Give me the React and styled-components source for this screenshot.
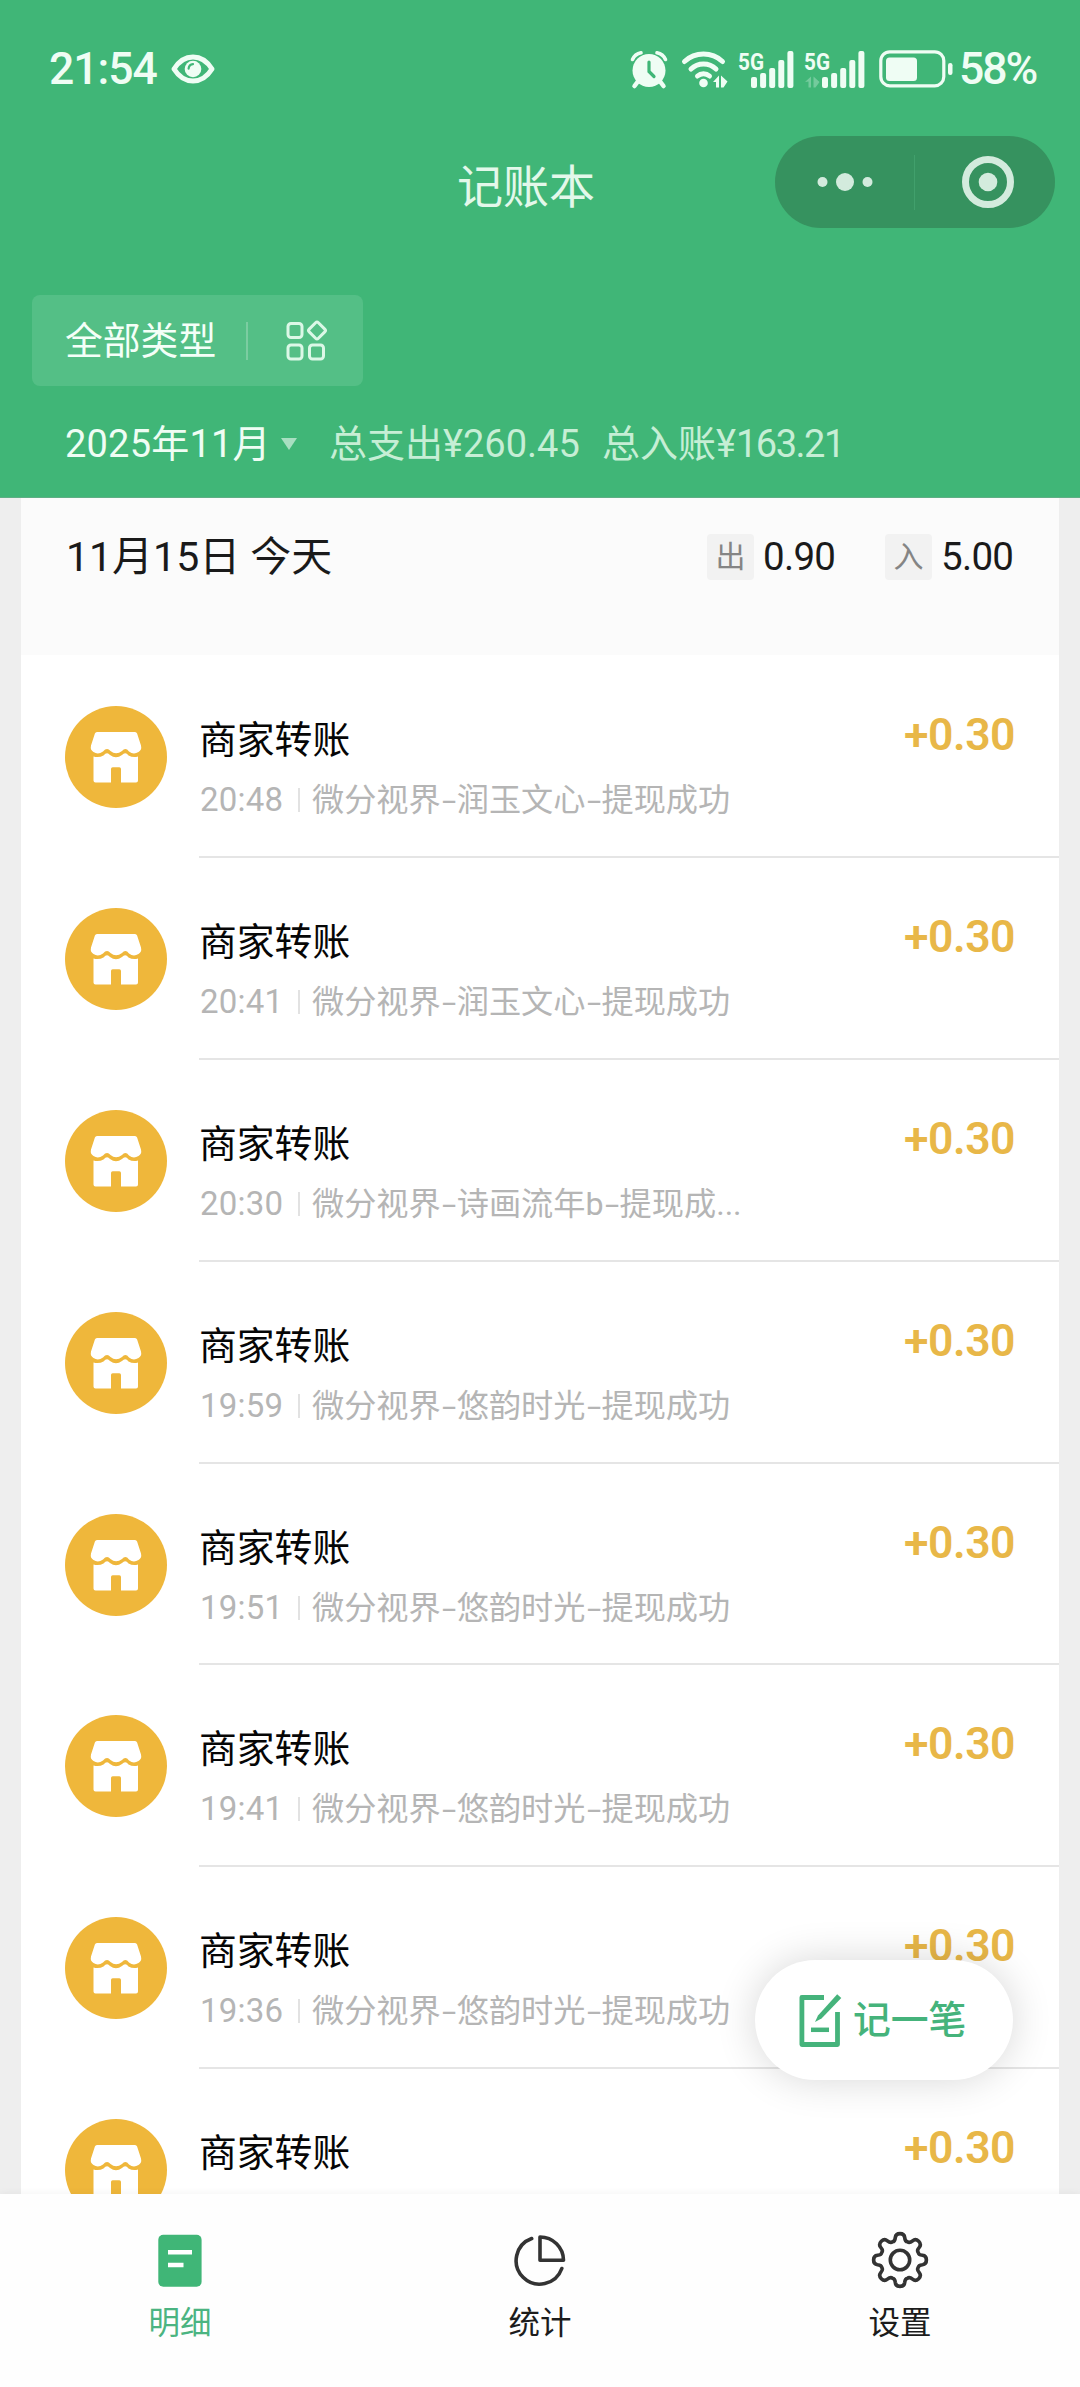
import React from 'react';
import styled, { createGlobalStyle } from 'styled-components';

const GlobalStyle = createGlobalStyle`
  * {
    box-sizing: border-box;
  }

  body {
    margin: 0;
    background: #eeeeee;
    font-family: Roboto, "Noto Sans CJK SC", sans-serif;
    overflow: hidden;
  }

  svg {
    display: block;
    flex: none;
    overflow: visible;
  }
`;

const Page = styled.div`
  display: flex;
  flex-direction: column;
  width: 1080px;
  height: 2387px;
  overflow: hidden;
  background: #eeeeee;
`;

const Header = styled.header`
  flex: none;
  height: 498px;
  background: #40b677;
  border-bottom: 1px solid #5fae85;
  color: #effdf4;
`;

const StatusBar = styled.div`
  display: flex;
  align-items: center;
  height: 92px;
  padding: 46px 42px 0 49px;
`;

const Clock = styled.span`
  width: 122px;
  font-size: 44.5px;
  font-weight: 500;
  line-height: 46px;
  letter-spacing: -1px;
  white-space: nowrap;
`;

const StatusIcons = styled.div`
  display: flex;
  align-items: center;
  gap: 9px;
  margin-left: auto;
`;

const Battery = styled.span`
  width: 79px;
  margin-left: -3px;
  font-size: 44.5px;
  font-weight: 500;
  line-height: 46px;
  letter-spacing: -2px;
  white-space: nowrap;
`;

const NavBar = styled.div`
  display: flex;
  align-items: center;
  justify-content: space-between;
  height: 92px;
  margin-top: 44px;
  padding: 0 25px 0 457px;
`;

const NavTitle = styled.h1`
  margin: 0;
  padding-top: 9px;
  font-size: 46px;
  font-weight: 400;
  line-height: 60px;
  color: #e3f8ea;
`;

const Capsule = styled.div`
  display: flex;
  align-items: center;
  width: 280px;
  height: 92px;
  border-radius: 46px;
  background: #36925f;
`;

const CapsuleButton = styled.div`
  display: flex;
  flex: none;
  align-items: center;
  justify-content: center;
  width: 139px;
  padding-left: ${({ $inset }) => $inset || 0}px;
`;

const CapsuleDivider = styled.div`
  width: 1px;
  height: 55px;
  background: #41a06c;
`;

const TypeFilter = styled.div`
  display: flex;
  align-items: center;
  width: 331px;
  height: 91px;
  margin: 67px 0 0 32px;
  padding-left: 33px;
  border-radius: 8px;
  background: #54bf86;
  font-size: 37.8px;
  line-height: 50px;
  color: #f4fff8;
`;

const FilterDivider = styled.div`
  width: 2px;
  height: 38px;
  margin: 0 38px 0 30px;
  background: #7bcda1;
`;

const MonthRow = styled.div`
  display: flex;
  align-items: center;
  height: 60px;
  margin-top: 28px;
  padding-left: 65px;
  font-size: 38px;
  line-height: 60px;
  white-space: nowrap;
`;

const Month = styled.span`
  width: 207px;
  letter-spacing: 0.2px;
`;

const Caret = styled.span`
  margin: 0 32px 0 9px;
  border: 8px solid transparent;
  border-top: 12px solid #a8dfc1;
  border-bottom: 0;
`;

const Total = styled.span`
  width: 273px;
  color: #c6eed5;
`;

const TotalValue = styled.span`
  letter-spacing: ${({ $spacing }) => $spacing || 0}px;
`;

const List = styled.main`
  position: relative;
  flex: 1;
  min-height: 0;
  margin: 0 21px;
  overflow: hidden;
  background: #ffffff;
`;

const DayHeader = styled.div`
  display: flex;
  align-items: flex-start;
  height: 158.4px;
  padding: 36px 45px 0 45px;
  background: #fbfbfb;
  border-bottom: 1px solid #ffffff;
`;

const DayTitle = styled.h2`
  flex: 1;
  margin: 0;
  font-size: 41px;
  font-weight: 400;
  line-height: 46px;
  color: #1a1a1a;
  white-space: nowrap;
`;

const DaySum = styled.div`
  display: flex;
  align-items: center;
  margin-left: 49px;
`;

const SumBadge = styled.span`
  width: 47px;
  height: 46px;
  border-radius: 4px;
  background: #f2f2f2;
  font-size: 30px;
  line-height: 46px;
  text-align: center;
  color: #858585;
`;

const SumValue = styled.span`
  width: 73px;
  margin-left: 9px;
  font-size: 38.5px;
  line-height: 46px;
  letter-spacing: -0.7px;
  color: #1a1a1a;
`;

const Entry = styled.article`
  display: flex;
  height: 201.8px;
  padding-left: 44px;
`;

const EntryIcon = styled.div`
  width: 102px;
  height: 102px;
  margin: 50px 32px 0 0;
  border-radius: 50%;
  background: #efb73b;
`;

const EntryBody = styled.div`
  display: flex;
  flex: 1;
  justify-content: space-between;
  padding-right: 44px;
  border-bottom: 2px solid #e5e5e5;
`;

const EntryTitle = styled.div`
  margin-top: 59px;
  font-size: 37.8px;
  line-height: 50px;
  color: #060606;
`;

const EntryMeta = styled.div`
  display: flex;
  align-items: center;
  height: 40px;
  margin-top: 15px;
  font-size: 32.2px;
  line-height: 40px;
  color: #b5b5b5;
  white-space: nowrap;
`;

const EntryTime = styled.span`
  width: 99px;
  padding-left: 1px;
  font-size: 33px;
  letter-spacing: 0.2px;
`;

const MetaDivider = styled.span`
  width: 2px;
  height: 24px;
  margin-right: 12px;
  background: #e2e2e2;
`;

const Dash = styled.span`
  display: inline-block;
  width: 16px;
  text-align: center;
  transform: scaleX(1.6);
`;

const EntryAmount = styled.div`
  margin-top: 54px;
  font-size: 44.5px;
  font-weight: 600;
  line-height: 50px;
  letter-spacing: -0.5px;
  color: #e8b748;
`;

const AddButton = styled.button`
  position: absolute;
  right: 46px;
  bottom: 114px;
  display: flex;
  align-items: center;
  width: 258px;
  height: 120px;
  padding: 0 0 0 44px;
  border: 0;
  border-radius: 60px;
  background: #ffffff;
  box-shadow: 0 0 40px rgba(0, 0, 0, 0.16);
  font-family: inherit;
  font-size: 37.8px;
  font-weight: 500;
  line-height: 50px;
  color: #45b37b;
  white-space: nowrap;
`;

const AddLabel = styled.span`
  margin-left: 11px;
`;

const TabBar = styled.nav`
  position: relative;
  display: grid;
  grid-template-columns: repeat(3, 1fr);
  flex: none;
  height: 193px;
  background: #fefefe;
  box-shadow: 0 0 8px rgba(0, 0, 0, 0.06);
`;

const Tab = styled.div`
  display: flex;
  flex-direction: column;
  align-items: center;
  padding-top: 36px;
  font-size: 31.5px;
  line-height: 40px;
  color: ${({ $active }) => ($active ? '#4bb481' : '#1c1c1c')};
`;

const TabLabel = styled.span`
  margin-top: 14px;
`;

const EyeIcon = () => (
  <svg width="44" height="30" viewBox="0 0 44 30" fill="none">
    <path d="M3 15C8 7 14 3 22 3s14 4 19 12c-5 8-11 12-19 12S8 23 3 15Z" stroke="#effdf4" strokeWidth="5" strokeLinejoin="round" />
    <circle cx="22" cy="15" r="8.3" fill="#effdf4" />
    <path d="M17.6 14.6a5 5 0 0 1 4.4-4.4" stroke="#40b677" strokeWidth="2.2" strokeLinecap="round" />
  </svg>
);

const AlarmIcon = () => (
  <svg width="42" height="38" viewBox="0 0 42 38" fill="none" stroke="#effdf4">
    <circle cx="19" cy="20.5" r="16.5" fill="#effdf4" stroke="none" />
    <path d="M2.5 9.5Q5 4 11 2.8M35.5 9.5Q33 4 27 2.8" strokeWidth="3.6" strokeLinecap="round" />
    <path d="M7.5 32l-3 4M30.5 32l3 4" strokeWidth="4.5" strokeLinecap="round" />
    <path d="M19 12v9.5l5 5" stroke="#40b677" strokeWidth="3.2" strokeLinecap="round" />
  </svg>
);

const WifiIcon = () => (
  <svg width="48" height="38" viewBox="0 0 48 38" fill="none" stroke="#effdf4" strokeWidth="5" strokeLinecap="round">
    <path d="M3.5 11.5a28 28 0 0 1 38 0" />
    <path d="M10 19a18 18 0 0 1 25 0" />
    <path d="M16.5 26a9 9 0 0 1 12 0" />
    <circle cx="22.5" cy="33" r="4.3" fill="#effdf4" stroke="none" />
    <path d="M32 32l6-6.500v12h-3v-5.500zM40 25.500l6.500 6-4 6h-2.500z" fill="#effdf4" stroke="none" />
  </svg>
);

const SignalIcon = ({ width, offset, idle }) => (
  <svg width={width} height="38" viewBox={`0 0 ${width} 38`} fill="#effdf4">
    <text x="0" y="19.5" fontFamily="Roboto, sans-serif" fontSize="24" fontWeight="700" textLength="26" lengthAdjust="spacingAndGlyphs">
      5G
    </text>
    {[11, 15, 20, 28, 37].map((h, i) => (
      <rect key={h} x={offset + i * 9.1} y={38 - h} width="6" height={h} rx="2" />
    ))}
    {idle && (
      <path d="M1 32l6-5.500v11h-2.500v-6zM9.500 26.500l6 5.500-4 5.500h-2z" opacity="0.3" />
    )}
  </svg>
);

const BatteryIcon = () => (
  <svg width="78" height="38" viewBox="-4 0 78 38" fill="none">
    <rect x="1.8" y="1.8" width="63" height="34" rx="9" stroke="#effdf4" strokeWidth="3.2" />
    <rect x="7" y="7.5" width="31" height="23.5" rx="3.5" fill="#effdf4" />
    <rect x="69" y="13" width="4.5" height="12" rx="2.2" fill="#effdf4" />
  </svg>
);

const MoreIcon = () => (
  <svg width="56" height="20" viewBox="0 0 56 20" fill="#d3ebdd">
    <circle cx="5.5" cy="10" r="5" />
    <circle cx="28" cy="10" r="9" />
    <circle cx="50.5" cy="10" r="5" />
  </svg>
);

const TargetIcon = () => (
  <svg width="52" height="52" viewBox="0 0 52 52" fill="none">
    <circle cx="26" cy="26" r="22.5" stroke="#d3ebdd" strokeWidth="7" />
    <circle cx="26" cy="26" r="9.3" fill="#d3ebdd" />
  </svg>
);

const TypesIcon = () => (
  <svg width="42" height="42" viewBox="0 0 42 42" fill="none" stroke="#dcf8e7" strokeWidth="3">
    <rect x="2" y="3.5" width="14" height="14" rx="3" />
    <rect x="2" y="25" width="14" height="14" rx="3" />
    <rect x="23.5" y="25" width="14" height="14" rx="3" />
    <rect x="24.5" y="4" width="13" height="13" rx="2" transform="rotate(45 31 10.5)" />
  </svg>
);

const ShopIcon = () => (
  <svg width="102" height="102" viewBox="0 0 102 102" fill="#ffffff">
    <path d="M32 26H70Q71.5 26 72.1 27.5L76 39.5Q77 44 73.5 46Q68.5 49 64 45.500Q60.500 41 57 45Q51 49.500 45.500 45Q42 41 38 45.500Q33 49 28.500 46Q25 44 26 39.500L29.900 27.500Q30.500 26 32 26Z" />
    <path d="M28.500 50.500Q34 52 38.500 49.500Q42 45.500 45 49Q51 53.500 57 49Q60.500 45.500 63.500 49.500Q68 52 73 50.500V74.500Q73 76.500 71 76.500H56V63Q56 61.300 54.300 61.300H47.700Q46 61.300 46 63V76.500H30.500Q28.500 76.500 28.500 74.500Z" />
  </svg>
);

const NoteIcon = () => (
  <svg width="43" height="56" viewBox="0 0 43 56" fill="none" stroke="#45b37b" strokeWidth="4.8">
    <path d="M25 5.5H2.9V52.5H38.5V20" strokeLinejoin="round" />
    <path d="M38.200 2.300L42.300 6L22.500 26.500L16 30L19 23.500Z" fill="#45b37b" stroke="none" />
    <path d="M12 37.8H30" strokeWidth="4.5" />
  </svg>
);

const DetailIcon = () => (
  <svg width="60" height="60" viewBox="0 0 60 60">
    <rect x="8.3" y="4.8" width="43.3" height="52" rx="5" fill="#40b677" />
    <path d="M18 22.3H42M18 35H33.5" stroke="#ffffff" strokeWidth="4.5" />
  </svg>
);

const ChartIcon = () => (
  <svg width="60" height="60" viewBox="0 0 60 60" fill="none" stroke="#333333" strokeWidth="3.6" strokeLinecap="round" strokeLinejoin="round">
    <path d="M30 7A23.5 23.5 0 0 1 53.5 30.3H30Z" />
    <path d="M21.7 8.5A23.5 23.5 0 1 0 51.8 38.5" />
  </svg>
);

// One tooth of the gear, repeated every 45 degrees around (30, 30)
const gearPath = () => {
  const tooth = [
    [-7.6, -18.2],
    [-5, -18.5],
    [-4.7, -22.5],
    [-4.3, -26.4],
    [0, -26.4],
    [4.3, -26.4],
    [4.7, -22.5],
    [5, -18.5],
    [7.6, -18.2],
  ];
  let d = '';
  for (let k = 0; k < 8; k += 1) {
    const a = (k * Math.PI) / 4;
    const p = tooth.map(([x, y]) => {
      const px = 30 + x * Math.cos(a) - y * Math.sin(a);
      const py = 30 + x * Math.sin(a) + y * Math.cos(a);
      return `${px.toFixed(2)} ${py.toFixed(2)}`;
    });
    d += `${k ? 'L' : 'M'}${p[0]}Q${p[1]} ${p[2]}Q${p[3]} ${p[4]}Q${p[5]} ${p[6]}Q${p[7]} ${p[8]}`;
  }
  return `${d}Z`;
};

const GearIcon = () => (
  <svg width="60" height="60" viewBox="0 0 60 60" fill="none" stroke="#333333" strokeWidth="3.6" strokeLinejoin="round">
    <path d={gearPath()} />
    <circle cx="30" cy="30" r="9.7" />
  </svg>
);

const entries = [
  { id: 1, time: '20:48', parts: ['微分视界', '润玉文心', '提现成功'] },
  { id: 2, time: '20:41', parts: ['微分视界', '润玉文心', '提现成功'] },
  { id: 3, time: '20:30', parts: ['微分视界', '诗画流年b', '提现成...'] },
  { id: 4, time: '19:59', parts: ['微分视界', '悠韵时光', '提现成功'] },
  { id: 5, time: '19:51', parts: ['微分视界', '悠韵时光', '提现成功'] },
  { id: 6, time: '19:41', parts: ['微分视界', '悠韵时光', '提现成功'] },
  { id: 7, time: '19:36', parts: ['微分视界', '悠韵时光', '提现成功'] },
  { id: 8 },
];

const EntryRow = ({ entry }) => (
  <Entry>
    <EntryIcon>
      <ShopIcon />
    </EntryIcon>
    <EntryBody>
      <div>
        <EntryTitle>商家转账</EntryTitle>
        {entry.parts && (
          <EntryMeta>
            <EntryTime>{entry.time}</EntryTime>
            <MetaDivider />
            <span>
              {entry.parts.map((part, i) => (
                <React.Fragment key={part}>
                  {i > 0 && <Dash>-</Dash>}
                  {part}
                </React.Fragment>
              ))}
            </span>
          </EntryMeta>
        )}
      </div>
      <EntryAmount>+0.30</EntryAmount>
    </EntryBody>
  </Entry>
);

const App = () => (
  <>
    <GlobalStyle />
    <Page>
      <Header>
        <StatusBar>
          <Clock>21:54</Clock>
          <EyeIcon />
          <StatusIcons>
            <AlarmIcon />
            <WifiIcon />
            <SignalIcon width={57} offset={13} />
            <SignalIcon width={62} offset={18} idle />
            <BatteryIcon />
            <Battery>58%</Battery>
          </StatusIcons>
        </StatusBar>
        <NavBar>
          <NavTitle>记账本</NavTitle>
          <Capsule>
            <CapsuleButton>
              <MoreIcon />
            </CapsuleButton>
            <CapsuleDivider />
            <CapsuleButton $inset={6}>
              <TargetIcon />
            </CapsuleButton>
          </Capsule>
        </NavBar>
        <TypeFilter>
          全部类型
          <FilterDivider />
          <TypesIcon />
        </TypeFilter>
        <MonthRow>
          <Month>2025年11月</Month>
          <Caret />
          <Total>
            总支出¥<TotalValue>260.45</TotalValue>
          </Total>
          <Total>
            总入账¥<TotalValue $spacing={-1.5}>163.21</TotalValue>
          </Total>
        </MonthRow>
      </Header>
      <List>
        <DayHeader>
          <DayTitle>11月15日 今天</DayTitle>
          <DaySum>
            <SumBadge>出</SumBadge>
            <SumValue>0.90</SumValue>
          </DaySum>
          <DaySum>
            <SumBadge>入</SumBadge>
            <SumValue>5.00</SumValue>
          </DaySum>
        </DayHeader>
        {entries.map((entry) => (
          <EntryRow key={entry.id} entry={entry} />
        ))}
        <AddButton>
          <NoteIcon />
          <AddLabel>记一笔</AddLabel>
        </AddButton>
      </List>
      <TabBar>
        <Tab $active>
          <DetailIcon />
          <TabLabel>明细</TabLabel>
        </Tab>
        <Tab>
          <ChartIcon />
          <TabLabel>统计</TabLabel>
        </Tab>
        <Tab>
          <GearIcon />
          <TabLabel>设置</TabLabel>
        </Tab>
      </TabBar>
    </Page>
  </>
);

export default App;
